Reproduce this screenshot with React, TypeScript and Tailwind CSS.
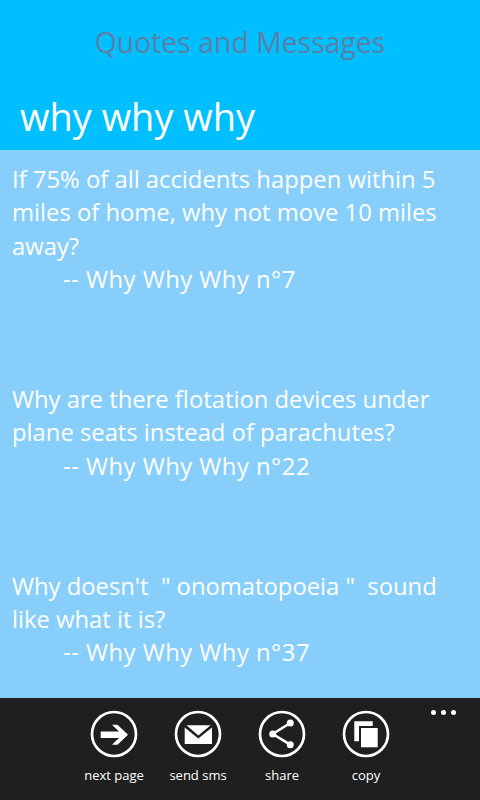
const F = "font-['Open_Sans','Noto_Sans',sans-serif]";

function Circle({ children }: { children: React.ReactNode }) {
  return (
    <svg width="48" height="48" viewBox="0 0 48 48" className="block">
      <circle cx="24" cy="24" r="22" fill="none" stroke="#fff" strokeWidth="2.700" />
      {children}
    </svg>
  );
}

const actions = [
  {
    label: "next page",
    icon: (
      <path d="M10.700 21.500H29L22 14.700h5.500L38 24.700 27.500 34.700H22L29 28H10.700z" fill="#fff" />
    ),
  },
  {
    label: "send sms",
    icon: (
      <>
        <path d="M12.500 15.300H36.500L24.300 25.500z" fill="#fff" />
        <path d="M10.700 17.500L24.300 28.500 38 17.500V34H10.700z" fill="#fff" />
      </>
    ),
  },
  {
    label: "share",
    icon: (
      <>
        <path d="M32.300 13L14.700 24l17.600 10.700" fill="none" stroke="#fff" strokeWidth="2.600" />
        <circle cx="32.300" cy="13" r="3.500" fill="#fff" />
        <circle cx="14.700" cy="24" r="3.500" fill="#fff" />
        <circle cx="32.300" cy="34.700" r="3.500" fill="#fff" />
      </>
    ),
  },
  {
    label: "copy",
    icon: (
      <>
        <path d="M12.300 11.300H30.700V16H17V31.300H12.300z" fill="#fff" />
        <path d="M19 18H35.700V37.300H19z" fill="#fff" />
      </>
    ),
  },
];

const quotes = [
  {
    text: "If 75% of all accidents happen within 5 miles of home, why not move 10 miles away?",
    by: "-- Why Why Why n°7",
  },
  {
    text: "Why are there flotation devices under plane seats instead of parachutes?",
    by: "-- Why Why Why n°22",
  },
  {
    text: "Why doesn't  \" onomatopoeia \"  sound like what it is?",
    by: "-- Why Why Why n°37",
  },
];

export default function App() {
  return (
    <div className={`${F} flex h-[800px] w-[480px] flex-col overflow-hidden bg-[#87cefa]`}>
      <header className="flex h-[150px] flex-col bg-[#00bfff]">
        <h1 className="pt-[23px] text-center text-[28.400px] leading-[38px] font-normal text-[#5b7fa8]">
          Quotes and Messages
        </h1>
        <h2 className="mt-[32px] pl-[20px] text-[38px] leading-[46px] font-normal text-white">
          why why why
        </h2>
      </header>
      <main className="flex flex-1 flex-col gap-[87px] pt-[13px] pl-[12px] pr-[20px]">
        {quotes.map((q) => (
          <div key={q.by} className="text-[23.800px] leading-[33.250px] text-white">
            <p className="whitespace-pre-wrap">{q.text}</p>
            <p className="pl-[51px] tracking-[0.500px]">{q.by}</p>
          </div>
        ))}
      </main>
      <footer className="relative flex h-[102px] justify-center gap-[36px] bg-[#1f1f1f] pt-[12px]">
        {actions.map((a) => (
          <div key={a.label} className="flex w-[48px] flex-col items-center">
            <Circle>{a.icon}</Circle>
            <span className="mt-[8px] whitespace-nowrap text-[13px] leading-[18px] text-white">
              {a.label}
            </span>
          </div>
        ))}
        <div className="absolute top-[12px] left-[431px] flex gap-[5px]">
          <span className="size-[5px] rounded-full bg-white" />
          <span className="size-[5px] rounded-full bg-white" />
          <span className="size-[5px] rounded-full bg-white" />
        </div>
      </footer>
    </div>
  );
}
